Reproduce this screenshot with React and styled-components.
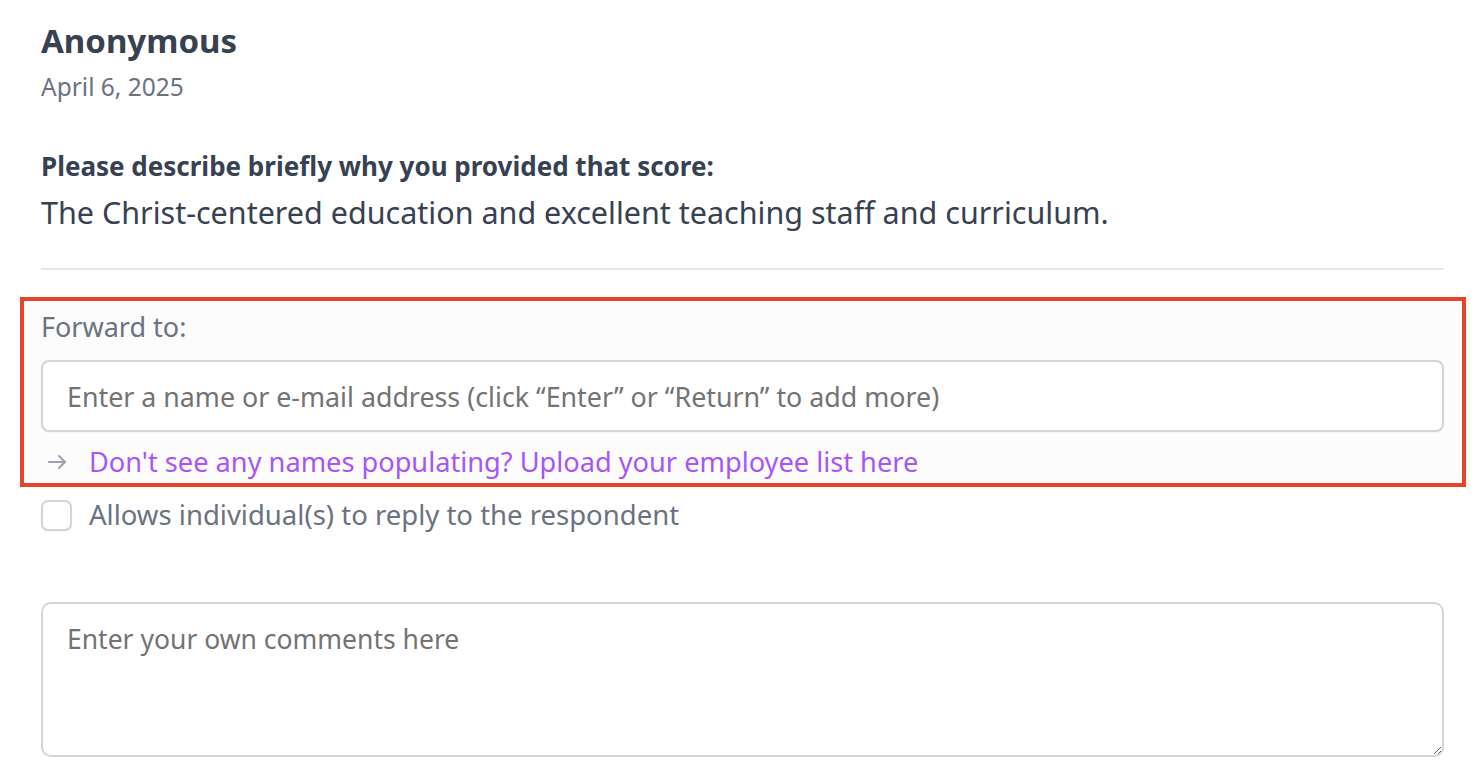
import React from 'react'
import styled, { createGlobalStyle } from 'styled-components'

const GlobalStyle = createGlobalStyle`
  html, body {
    margin: 0;
    padding: 0;
    background: #ffffff;
  }
  body {
    font-family: "Noto Sans", "Open Sans", Arial, sans-serif;
    color: #374151;
  }
  * { box-sizing: border-box; }
`

const Page = styled.div`
  width: 1444px;
  padding: 17px 0 0 41px;
`

const Header = styled.div`
  display: flex;
  flex-direction: column;
`

const Name = styled.h1`
  margin: 0;
  font-size: 33px;
  line-height: 48px;
  font-weight: 700;
  color: #374151;
`

const DateText = styled.div`
  font-size: 24.5px;
  line-height: 34px;
  color: #6b7280;
  margin-top: 5px;
`

const Answer = styled.div`
  margin-top: 44px;
  padding-bottom: 35px;
  border-bottom: 2px solid #e5e7eb;
`

const Question = styled.div`
  font-size: 26px;
  line-height: 36px;
  font-weight: 700;
  color: #374151;
`

const Reply = styled.div`
  font-size: 30.5px;
  line-height: 42px;
  margin-top: 7px;
  color: #374151;
`

const Highlight = styled.div`
  margin: 27px -22px 0 -21px;
  border: 4px solid #e8432d;
  background: #fcfcfd;
  padding: 8px 18px 0 17px;
`

const Label = styled.div`
  font-size: 27px;
  line-height: 36px;
  color: #6b7280;
`

const TextInput = styled.input`
  display: block;
  width: 100%;
  height: 72px;
  margin-top: 15px;
  padding: 0 24px;
  border: 2px solid #d1d5db;
  border-radius: 8px;
  background: #ffffff;
  font-family: inherit;
  font-size: 26.8px;
  color: #374151;
  outline: none;
  box-shadow: 0 1px 2px rgba(0, 0, 0, 0.04);
  &::placeholder {
    color: #737373;
  }
`

const HelpRow = styled.div`
  display: flex;
  align-items: center;
  gap: 22px;
  height: 42px;
  margin-top: 9px;
  padding-left: 6px;
`

const HelpLink = styled.a`
  font-size: 27.2px;
  line-height: 36px;
  color: #a855f7;
  text-decoration: none;
  cursor: pointer;
`

const CheckRow = styled.label`
  display: flex;
  align-items: center;
  gap: 17px;
  margin-top: 10px;
  font-size: 27.5px;
  line-height: 36px;
  color: #6b7280;
`

const Box = styled.span`
  flex: none;
  width: 31px;
  height: 31px;
  border: 2px solid #d1d5db;
  border-radius: 7px;
  background: #ffffff;
  box-shadow: 0 1px 2px rgba(0, 0, 0, 0.05);
`

const Comments = styled.textarea`
  display: block;
  width: 100%;
  height: 155px;
  margin-top: 69px;
  padding: 17px 24px;
  border: 2px solid #d1d5db;
  border-radius: 10px;
  font-family: inherit;
  font-size: 26.5px;
  line-height: 36px;
  color: #374151;
  outline: none;
  resize: vertical;
  &::placeholder {
    color: #737373;
  }
`

function ArrowIcon() {
  return (
    <svg width="20" height="20" viewBox="0 0 20 20" fill="none" stroke="#9ca3af" strokeWidth="2" strokeLinecap="round" strokeLinejoin="round">
      <path d="M2 10h16" />
      <path d="M12 4l6 6-6 6" />
    </svg>
  )
}

export default function App() {
  return (
    <>
      <GlobalStyle />
      <Page>
        <Header>
          <Name>Anonymous</Name>
          <DateText>April 6, 2025</DateText>
        </Header>
        <Answer>
          <Question>Please describe briefly why you provided that score:</Question>
          <Reply>The Christ-centered education and excellent teaching staff and curriculum.</Reply>
        </Answer>
        <Highlight>
          <Label>Forward to:</Label>
          <TextInput placeholder="Enter a name or e-mail address (click “Enter” or “Return” to add more)" />
          <HelpRow>
            <ArrowIcon />
            <HelpLink>Don't see any names populating? Upload your employee list here</HelpLink>
          </HelpRow>
        </Highlight>
        <CheckRow>
          <Box />
          Allows individual(s) to reply to the respondent
        </CheckRow>
        <Comments placeholder="Enter your own comments here" />
      </Page>
    </>
  )
}
